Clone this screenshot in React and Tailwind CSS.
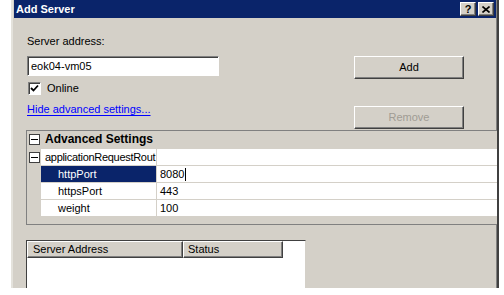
import React from "react";

const raised =
  "border border-t-white border-l-white border-r-[#404040] border-b-[#404040] shadow-[inset_-1px_-1px_0_#808080]";
const sunken =
  "border border-t-[#808080] border-l-[#808080] border-r-white border-b-white shadow-[inset_1px_1px_0_#404040]";

function MinusBox() {
  return (
    <div className="w-[11px] h-[11px] border border-[#404040] bg-white flex items-center justify-center">
      <div className="w-[7px] h-px bg-black" />
    </div>
  );
}

function PropRow({ label, value, selected, caret }) {
  return (
    <div className="flex h-[17px] border-b border-[#d4d0c8]">
      <div className="w-[14px] bg-[#d4d0c8] shrink-0" />
      <div
        className={
          "w-[116px] shrink-0 pl-[17px] flex items-center border-r border-[#d4d0c8] " +
          (selected ? "bg-[#0a246a] text-white" : "bg-white text-black")
        }
      >
        {label}
      </div>
      <div className="flex-1 bg-white pl-[3px] flex items-center">
        {value}
        {caret && <span className="inline-block w-px h-[13px] bg-black ml-px" />}
      </div>
    </div>
  );
}

export default function App() {
  return (
    <div className="w-[504px] h-[295px] bg-white font-['Liberation_Sans',Arial,sans-serif] text-[11px] leading-[13px] text-black">
      <div className="ml-[11px] w-[488px] h-[288px] bg-[#d4d0c8] border-l-2 border-l-[#e4e2dc] border-r-2 border-r-[#404040] shadow-[inset_-1px_0_0_#808080] overflow-hidden flex flex-col">
        {/* Title bar */}
        <div className="mx-px h-[18px] bg-[#0a246a] flex items-center justify-between pl-[2px] pr-[2px] shrink-0">
          <span className="text-white font-bold">Add Server</span>
          <div className="flex gap-px">
            <div className={"w-[16px] h-[14px] bg-[#d4d0c8] flex items-center justify-center font-bold " + raised}>
              ?
            </div>
            <div className={"w-[16px] h-[14px] bg-[#d4d0c8] flex items-center justify-center ml-px " + raised}>
              <svg width="8" height="7" viewBox="0 0 8 7">
                <path d="M0.5 0.5 L7.5 6.5 M7.5 0.5 L0.5 6.5" stroke="black" strokeWidth="1.6" />
              </svg>
            </div>
          </div>
        </div>

        {/* Top section */}
        <div className="flex items-start h-[112px] shrink-0 pl-[14px] pr-[33px]">
          <div className="w-[192px] flex flex-col">
            <div className="mt-[17px] h-[13px]">Server address:</div>
            <div className={"mt-[8px] h-[20px] bg-white flex items-center pl-[3px] " + sunken}>eok04-vm05</div>
            <div className="mt-[6px] h-[13px] flex items-center gap-[6px] pl-px">
              <div className={"w-[13px] h-[13px] bg-white flex items-center justify-center " + sunken}>
                <svg width="9" height="9" viewBox="0 0 9 9" className="block">
                  <path d="M1 4 L3.5 6.5 L8 1.5" stroke="black" strokeWidth="1.8" fill="none" />
                </svg>
              </div>
              <span>Online</span>
            </div>
            <div className="mt-[8px] h-[13px] text-[#0000ff] underline underline-offset-2">Hide advanced settings...</div>
          </div>
          <div className="ml-auto flex flex-col">
            <button className={"mt-[38px] w-[110px] h-[23px] bg-[#d4d0c8] " + raised}>Add</button>
            <button className={"mt-[27px] w-[110px] h-[23px] bg-[#d4d0c8] text-[#a09c94] " + raised}>
              Remove
            </button>
          </div>
        </div>

        {/* Property grid */}
        <div className="ml-[13px] w-[490px] h-[95px] border border-[#808080] bg-[#d4d0c8] shrink-0">
          <div className="flex h-[18px] border-b border-[#d4d0c8] items-center">
            <div className="w-[14px] flex justify-center shrink-0">
              <MinusBox />
            </div>
            <span className="pl-[4px] font-bold text-[12px]">Advanced Settings</span>
          </div>
          <div className="flex h-[17px] border-b border-[#d4d0c8]">
            <div className="w-[14px] bg-[#d4d0c8] shrink-0 flex items-center justify-center">
              <MinusBox />
            </div>
            <div className="w-[116px] shrink-0 pl-[4px] bg-white flex items-center overflow-hidden whitespace-nowrap tracking-[-0.3px] border-r border-[#d4d0c8]">
              applicationRequestRout
            </div>
            <div className="flex-1 bg-white" />
          </div>
          <PropRow label="httpPort" value="8080" selected caret />
          <PropRow label="httpsPort" value="443" />
          <PropRow label="weight" value="100" />
        </div>

        {/* Server list */}
        <div className="mt-[15px] ml-[13px] w-[280px] flex-1 bg-white border-t border-l border-t-[#404040] border-l-[#404040] border-r border-r-[#d4d0c8]">
          <div className="flex w-[256px] h-[17px]">
            <div className={"w-[156px] bg-[#d4d0c8] pl-[5px] flex items-center " + raised}>Server Address</div>
            <div className={"w-[100px] bg-[#d4d0c8] pl-[4px] flex items-center " + raised}>Status</div>
          </div>
        </div>
      </div>
    </div>
  );
}
